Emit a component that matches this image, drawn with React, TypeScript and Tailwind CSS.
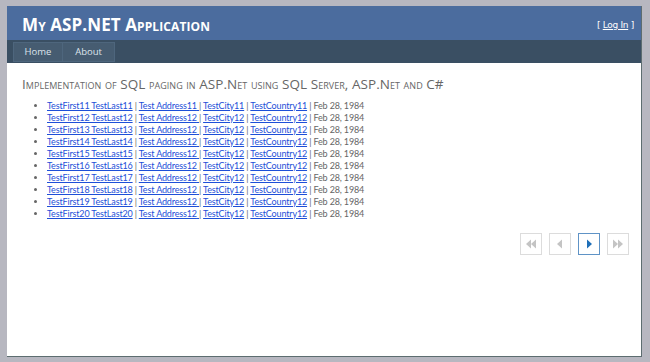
import React from 'react';

const rows = [
  { name: 'TestFirst11 TestLast11', address: 'Test Address11', city: 'TestCity11', country: 'TestCountry11' },
  { name: 'TestFirst12 TestLast12', address: 'Test Address12', city: 'TestCity12', country: 'TestCountry12' },
  { name: 'TestFirst13 TestLast13', address: 'Test Address12', city: 'TestCity12', country: 'TestCountry12' },
  { name: 'TestFirst14 TestLast14', address: 'Test Address12', city: 'TestCity12', country: 'TestCountry12' },
  { name: 'TestFirst15 TestLast15', address: 'Test Address12', city: 'TestCity12', country: 'TestCountry12' },
  { name: 'TestFirst16 TestLast16', address: 'Test Address12', city: 'TestCity12', country: 'TestCountry12' },
  { name: 'TestFirst17 TestLast17', address: 'Test Address12', city: 'TestCity12', country: 'TestCountry12' },
  { name: 'TestFirst18 TestLast18', address: 'Test Address12', city: 'TestCity12', country: 'TestCountry12' },
  { name: 'TestFirst19 TestLast19', address: 'Test Address12', city: 'TestCity12', country: 'TestCountry12' },
  { name: 'TestFirst20 TestLast20', address: 'Test Address12', city: 'TestCity12', country: 'TestCountry12' },
];

const PagerButton = ({ kind, active }: { kind: 'first' | 'prev' | 'next' | 'last'; active?: boolean }) => {
  const fill = active ? '#1f6fb8' : '#c4c4c4';
  return (
    <button
      className={`w-[22px] h-[22px] flex items-center justify-center border bg-white ${
        active ? 'border-[#5f93c6]' : 'border-[#dcdcdc]'
      }`}
    >
      <svg width="12" height="12" viewBox="0 0 12 12">
        {kind === 'first' && (
          <>
            <polygon points="1,6 6,1.5 6,10.5" fill={fill} />
            <polygon points="6,6 11,1.5 11,10.5" fill={fill} />
          </>
        )}
        {kind === 'prev' && <polygon points="3,6 8,1.5 8,10.5" fill={fill} />}
        {kind === 'next' && <polygon points="4,1.5 9,6 4,10.5" fill={fill} />}
        {kind === 'last' && (
          <>
            <polygon points="1,1.5 6,6 1,10.5" fill={fill} />
            <polygon points="6,1.5 11,6 6,10.5" fill={fill} />
          </>
        )}
      </svg>
    </button>
  );
};

export default function App() {
  return (
    <div className="w-[650px] h-[362px] bg-[#b7b7c0] pt-[6px] pl-[7px] pr-[8px] pb-[5px] font-['Open_Sans',sans-serif]">
      <div className="h-full bg-white border-r border-b border-[#5d6d70] flex flex-col">
        {/* Header */}
        <div className="h-[34px] bg-[#4b6c9e] flex items-start justify-between pl-[15px] pr-[7px]">
          <h1 className="text-white font-bold text-[17px] leading-none mt-[10px] tracking-[0.1px] [font-variant:small-caps]">
            My ASP.NET Application
          </h1>
          <div className="text-white text-[9px] mt-[13px] font-['DejaVu_Sans',sans-serif] tracking-[-0.3px]">
            [ <a className="underline">Log In</a> ]
          </div>
        </div>

        {/* Menu */}
        <div className="h-[23px] bg-[#3a4f63] flex items-start pl-[6px] pt-[2px]">
          <a className="h-[20px] w-[50px] bg-[#465c71] border border-[#4e667d] text-[#dde4ec] text-[9.5px] flex items-center justify-center">
            Home
          </a>
          <a className="h-[20px] w-[52px] bg-[#465c71] border border-l-0 border-[#4e667d] text-[#dde4ec] text-[9.5px] flex items-center justify-center">
            About
          </a>
        </div>

        {/* Main */}
        <div className="flex-1 pl-[15px] pr-[12px] pt-[15px]">
          <h2 className="text-[#666666] text-[13.5px] leading-none [font-variant:small-caps] tracking-[0.05px]">
            Implementation of SQL paging in ASP.Net using SQL Server, ASP.Net and C#
          </h2>
          <ul className="mt-[8px] pl-[25px] list-disc font-['Lato',sans-serif] text-[9px] leading-[12px] tracking-[-0.15px] text-[#666666] marker:text-[#666666]">
            {rows.map((r) => (
              <li key={r.name}>
                <a className="text-[#1d4fd8] underline">{r.name}</a> |{' '}
                <a className="text-[#1d4fd8] underline">{r.address} </a>|{' '}
                <a className="text-[#1d4fd8] underline">{r.city}</a> |{' '}
                <a className="text-[#1d4fd8] underline">{r.country}</a> | Feb 28, 1984
              </li>
            ))}
          </ul>
          <div className="flex justify-end gap-[7px] mt-[13px]">
            <PagerButton kind="first" />
            <PagerButton kind="prev" />
            <PagerButton kind="next" active />
            <PagerButton kind="last" />
          </div>
        </div>
      </div>
    </div>
  );
}
